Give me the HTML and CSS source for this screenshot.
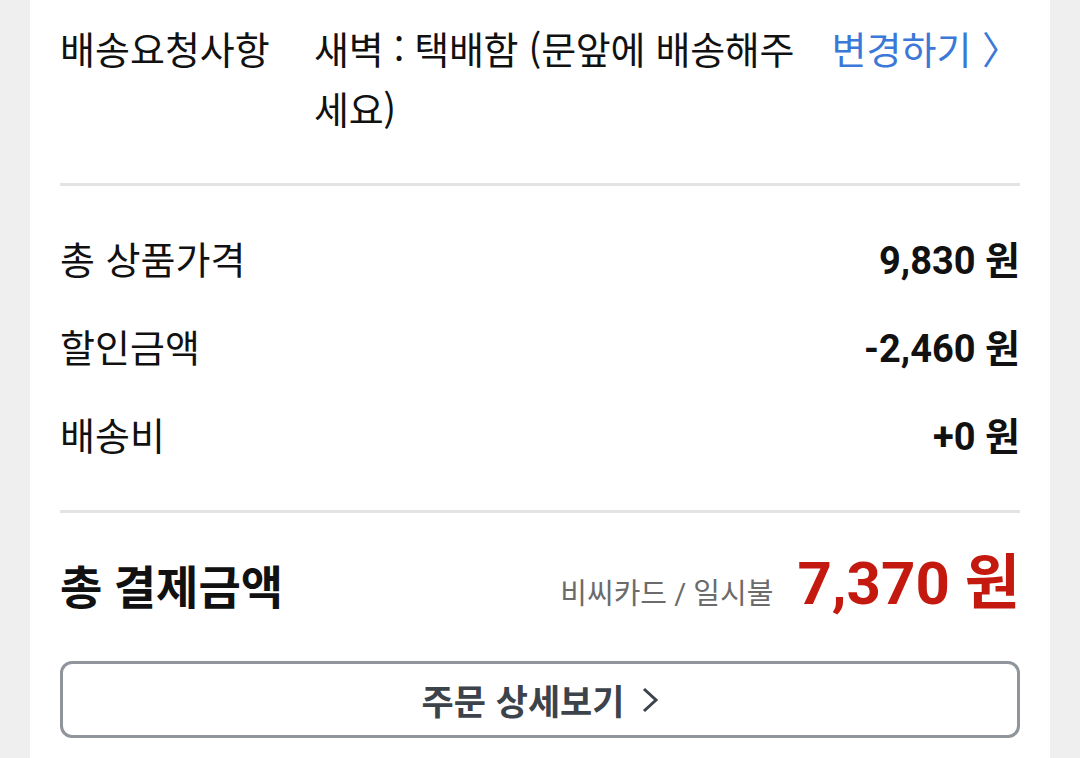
FILE: index.html
```html
<!DOCTYPE html>
<html lang="ko">
<head>
  <meta charset="UTF-8">
  <meta name="viewport" content="width=device-width, initial-scale=1.0">
  <title>주문 결제 정보</title>
  <link rel="stylesheet" href="styles.css">
</head>
<body>
  <main class="card">
    <section class="request">
      <div class="request-label">배송요청사항</div>
      <div class="request-value">새벽 : 택배함 (문앞에 배송해주세요)</div>
      <a class="request-link" href="#">변경하기 〉</a>
    </section>

    <section class="summary">
      <div class="summary-row">
        <span class="summary-label">총 상품가격</span>
        <span class="summary-amount">9,830 원</span>
      </div>
      <div class="summary-row">
        <span class="summary-label">할인금액</span>
        <span class="summary-amount">-2,460 원</span>
      </div>
      <div class="summary-row">
        <span class="summary-label">배송비</span>
        <span class="summary-amount">+0 원</span>
      </div>
    </section>

    <section class="total">
      <span class="total-label">총 결제금액</span>
      <span class="total-method">비씨카드 / 일시불</span>
      <span class="total-amount">7,370 원</span>
    </section>

    <button class="detail-btn">
      주문 상세보기
      <svg class="detail-chevron" width="18" height="30" viewBox="0 0 18 30">
        <path d="M3 4 L15 15 L3 26" fill="none" stroke="currentColor" stroke-width="3"/>
      </svg>
    </button>
  </main>
</body>
</html>
```

FILE: styles.css
```css
body {
  margin: 0;
  background-color: #efefef;
  font-family: Roboto, "Noto Sans CJK KR", sans-serif;
  color: #111;
}
.card {
  margin: 0 30px;
  padding: 0 30px;
  background-color: #fff;
  min-height: 758px;
  box-sizing: border-box;
}
.request {
  display: grid;
  grid-template-columns: 254px 500px 1fr;
  padding: 18px 0 45px;
  font-size: 38px;
  line-height: 60px;
  border-bottom: 3px solid #e3e3e3;
}
.request-label, .request-value {
  font-family: "Noto Sans CJK KR", sans-serif;
}
.request-value {
  letter-spacing: -0.3px;
}
.request-link {
  text-align: right;
  color: #3b78d8;
  text-decoration: none;
  font-family: "Noto Sans CJK KR", sans-serif;
}
.summary {
  padding: 28px 0 32px;
  border-bottom: 3px solid #e3e3e3;
}
.summary-row {
  display: flex;
  justify-content: space-between;
  align-items: baseline;
  height: 88px;
  line-height: 88px;
  font-size: 38px;
}
.summary-label {
  font-family: "Noto Sans CJK KR", sans-serif;
}
.summary-amount {
  font-weight: 700;
  font-size: 38px;
}
.total {
  display: flex;
  align-items: baseline;
  padding: 38px 0 34px;
  line-height: 66px;
}
.total-label {
  font-size: 46px;
  font-weight: 700;
  flex: 1;
}
.total-method {
  font-size: 29px;
  color: #6b6b6b;
  margin-right: 24px;
}
.total-amount {
  font-size: 60px;
  font-weight: 700;
  color: #c4190f;
}
.detail-btn {
  display: flex;
  align-items: center;
  justify-content: center;
  gap: 16px;
  width: 100%;
  height: 77px;
  background-color: #fff;
  border: 3px solid #8f959b;
  border-radius: 12px;
  font-family: "Noto Sans CJK KR", sans-serif;
  font-size: 35px;
  font-weight: 700;
  color: #3d434a;
  cursor: pointer;
}
.detail-chevron {
  color: #3d434a;
}
```
